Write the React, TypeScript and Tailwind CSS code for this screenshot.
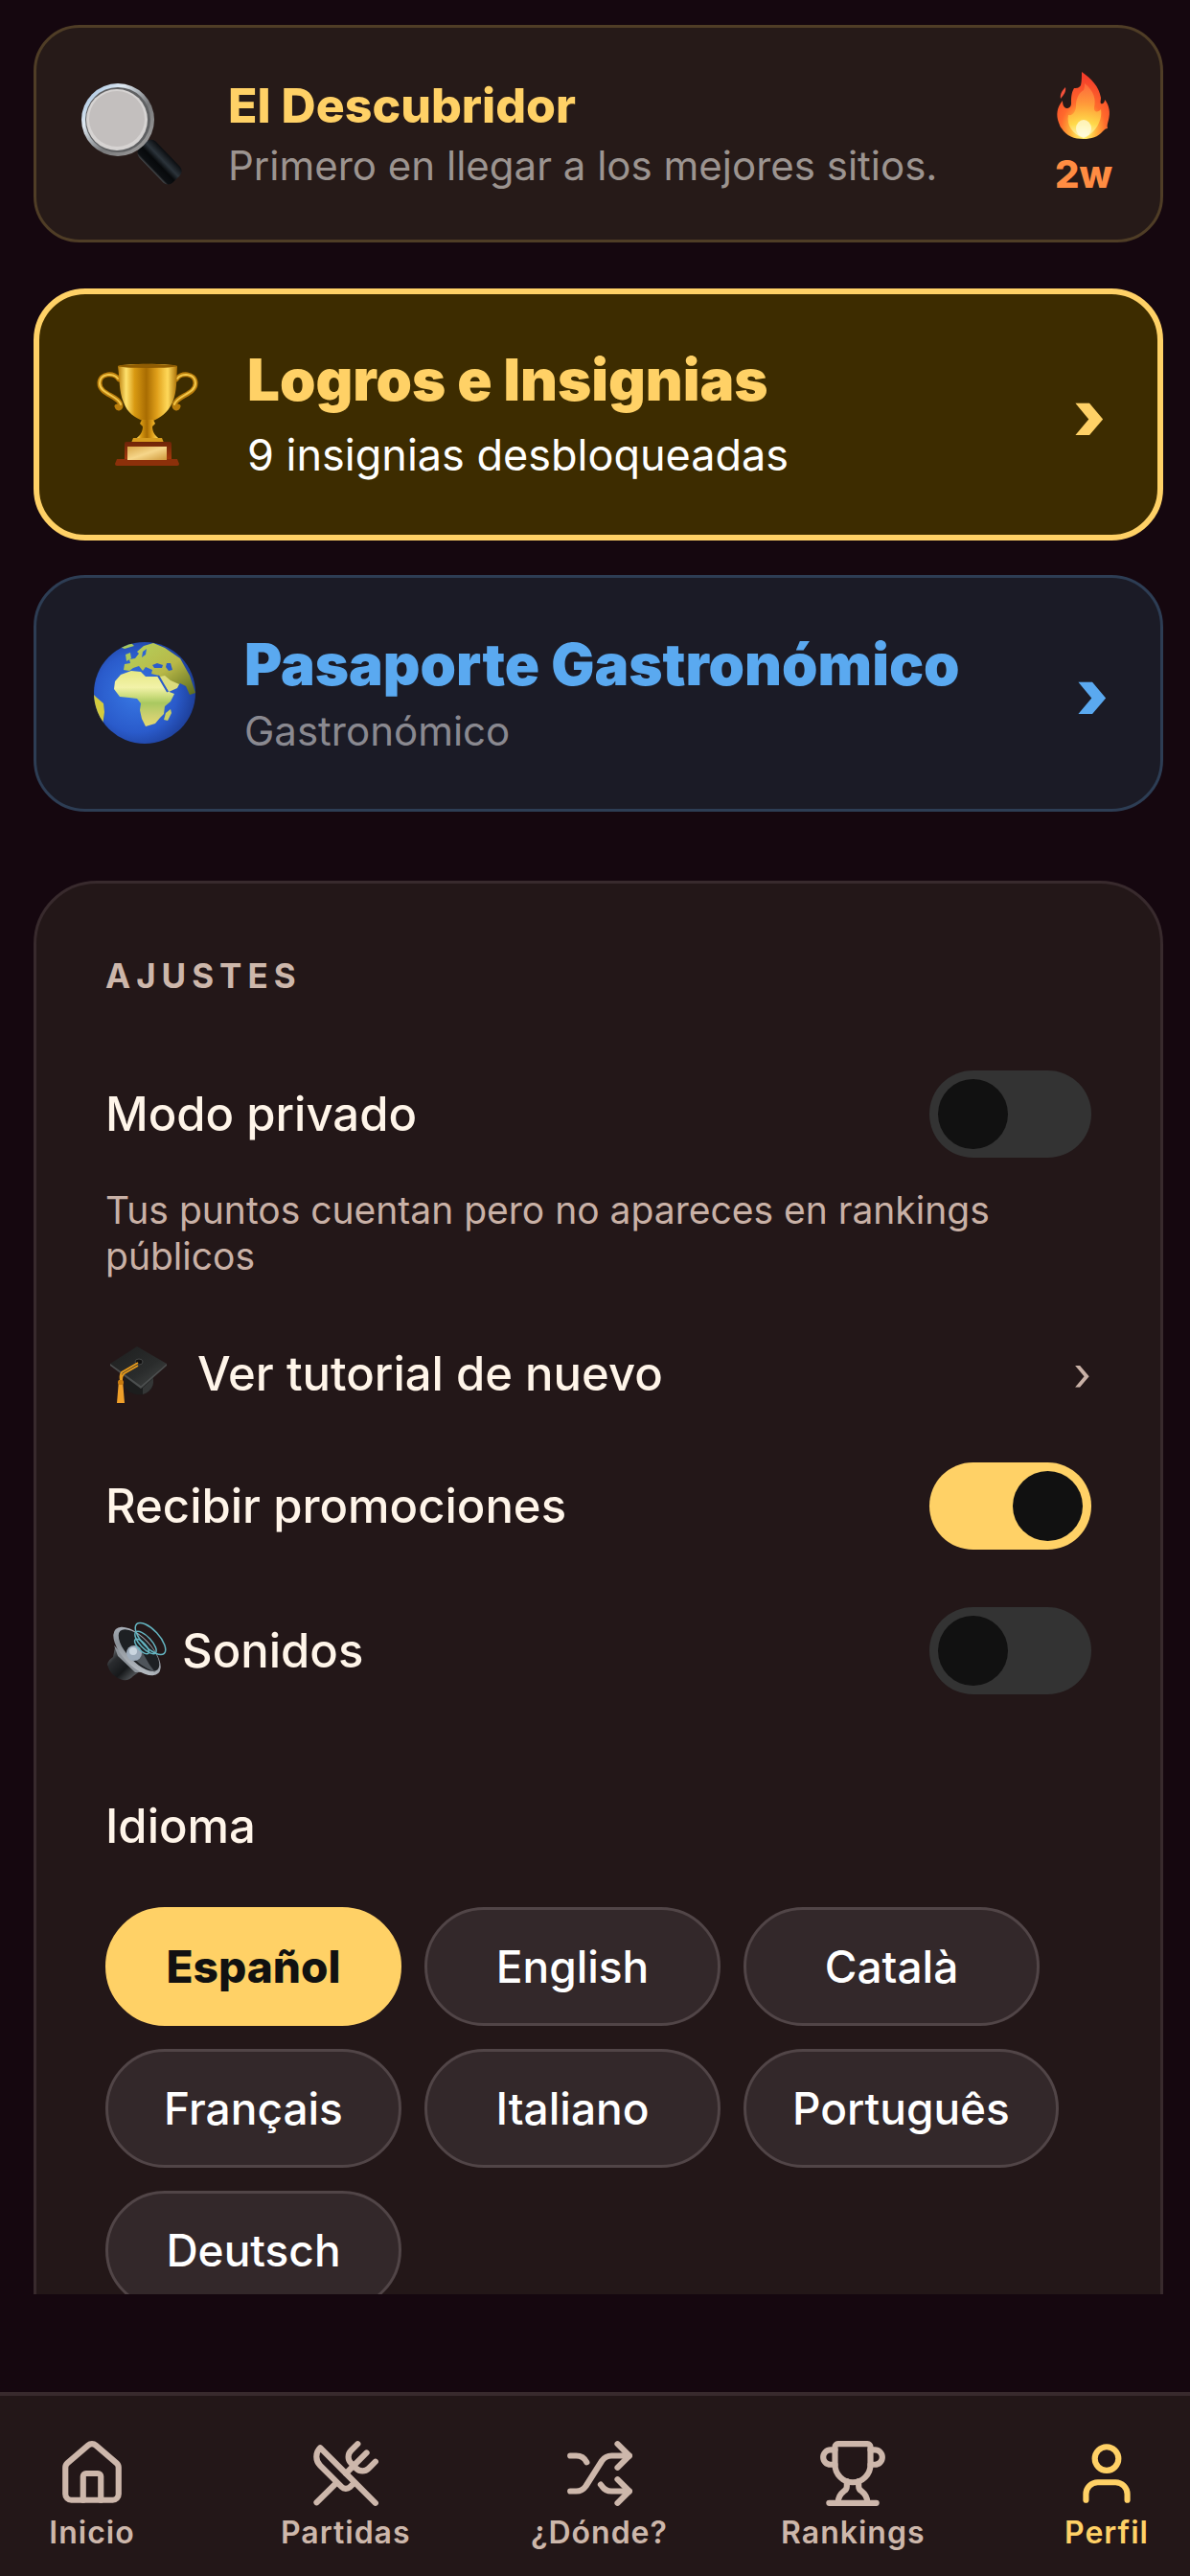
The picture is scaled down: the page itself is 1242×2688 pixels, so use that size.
import React, { useState } from 'react';
import { House, Shuffle, Trophy, User, UtensilsCrossed } from 'lucide-react';

const languages = ['Español', 'English', 'Català', 'Français', 'Italiano', 'Português', 'Deutsch'];

const tabs = [
  { label: 'Inicio', icon: House },
  { label: 'Partidas', icon: UtensilsCrossed },
  { label: '¿Dónde?', icon: Shuffle },
  { label: 'Rankings', icon: Trophy },
  { label: 'Perfil', icon: User },
];

const MagnifierIcon = () => (
  <svg className="w-[110px] h-[110px] shrink-0" viewBox="0 0 110 110" aria-hidden="true">
    <defs>
      <linearGradient id="mg-ring" x1="0" y1="0" x2="1" y2="1">
        <stop offset="0" stopColor="#8fb4da" />
        <stop offset="0.3" stopColor="#dfe9f2" />
        <stop offset="0.6" stopColor="#77787a" />
        <stop offset="1" stopColor="#a9a7a6" />
      </linearGradient>
      <linearGradient id="mg-handle" x1="0" y1="0" x2="0" y2="1">
        <stop offset="0" stopColor="#0b0d10" />
        <stop offset="0.35" stopColor="#2c343b" />
        <stop offset="0.6" stopColor="#07090b" />
        <stop offset="0.9" stopColor="#0d1013" />
        <stop offset="1" stopColor="#4a4d50" />
      </linearGradient>
    </defs>
    <path d="M62 66 L69 59 L78 68 L70 76Z" fill="#8f979e" />
    <rect x="66" y="57" width="50" height="24" rx="7" fill="url(#mg-handle)" transform="rotate(46 70 69)" />
    <circle cx="41" cy="40" r="38" fill="url(#mg-ring)" />
    <circle cx="41" cy="40" r="34" fill="#5f6062" />
    <circle cx="40" cy="40" r="32" fill="#d6d3d2" />
    <circle cx="40" cy="39" r="29" fill="#c3bfbe" />
  </svg>
);

const FlameIcon = () => (
  <svg className="w-[60px] h-[72px]" viewBox="0 0 60 72" aria-hidden="true">
    <defs>
      <radialGradient id="fl-body" cx="0.5" cy="0.88" r="0.8">
        <stop offset="0" stopColor="#fffbd0" />
        <stop offset="0.12" stopColor="#ffee6a" />
        <stop offset="0.3" stopColor="#ffb53a" />
        <stop offset="0.55" stopColor="#ff6a2c" />
        <stop offset="1" stopColor="#f43e2a" />
      </radialGradient>
      <linearGradient id="fl-core" x1="0" y1="0" x2="0" y2="1">
        <stop offset="0" stopColor="#ff7040" />
        <stop offset="0.4" stopColor="#ffa73c" />
        <stop offset="0.75" stopColor="#ffe04c" />
        <stop offset="1" stopColor="#fffde0" />
      </linearGradient>
    </defs>
    <path d="M6 29C5 24 8 20 11 17C12 22 9 25 6 29Z" fill="#f5503a" />
    <path
      d="M28 1C38 8 46 16 48 28C48 31 47 33 48 34C50 35 52 33 52 30C57 36 58 44 56 51C55 55 54 57 55 60C53 60 52 61 50 63C45 69 38 71 30 71C20 71 12 68 7 60C5 58 5 56 4 54C1 46 2 38 8 31C8 35 9 38 12 39C15 39 17 37 17 34C17 28 17 23 20 18C23 18 25 18 27 15C28 11 28 6 28 1Z"
      fill="url(#fl-body)"
    />
    <path
      d="M31 13C41 21 43 30 41 38C40 43 45 44 48 40C50 50 43 65 30 70C18 66 12 56 14 46C19 47 22 42 22 36C22 28 26 22 30 20C31 18 31 15 31 13Z"
      fill="url(#fl-core)"
      opacity="0.8"
    />
    <ellipse cx="30" cy="60" rx="8" ry="9" fill="#fffde8" opacity="0.7" />
  </svg>
);

const CupIcon = () => (
  <svg className="w-[117px] h-[117px] shrink-0" viewBox="0 0 117 117" aria-hidden="true">
    <defs>
      <linearGradient id="cup-gold" x1="0" y1="0" x2="1" y2="0">
        <stop offset="0" stopColor="#b87a08" />
        <stop offset="0.14" stopColor="#ffe26e" />
        <stop offset="0.28" stopColor="#d99a12" />
        <stop offset="0.48" stopColor="#a86c02" />
        <stop offset="0.66" stopColor="#e0a01a" />
        <stop offset="0.84" stopColor="#ffd95a" />
        <stop offset="1" stopColor="#a96d04" />
      </linearGradient>
      <linearGradient id="cup-wood" x1="0" y1="0" x2="0" y2="1">
        <stop offset="0" stopColor="#6e2408" />
        <stop offset="1" stopColor="#a83b0c" />
      </linearGradient>
      <linearGradient id="cup-plate" x1="0" y1="0" x2="1" y2="1">
        <stop offset="0" stopColor="#d9a648" />
        <stop offset="0.5" stopColor="#f6d68a" />
        <stop offset="1" stopColor="#cf983a" />
      </linearGradient>
    </defs>
    <g fill="none" strokeLinecap="round">
      <path d="M29 22C25 14 9 15 9 26C9 38 30 39 31 49C31 52 28 53 27 50" stroke="#b97d0c" strokeWidth="5" />
      <path d="M28 21C24 15 9 15 9 26C9 37 29 39 31 48" stroke="#f3c84a" strokeWidth="2" />
      <path d="M89 22C93 14 109 15 109 26C109 38 88 39 87 49C87 52 90 53 91 50" stroke="#b97d0c" strokeWidth="5" />
      <path d="M90 21C94 15 109 15 109 26C109 37 89 39 87 48" stroke="#f3c84a" strokeWidth="2" />
    </g>
    <path d="M28 8C38 5 80 5 90 8C89 22 90 34 85 46C80 57 72 62 65 65H54C46 62 38 57 34 46C29 34 30 22 28 8Z" fill="url(#cup-gold)" />
    <ellipse cx="59" cy="8" rx="31" ry="2" fill="#8f5c03" />
    <path d="M53 64H65L67 68L64 71C64 77 67 82 75 86H43C51 82 54 77 54 71L51 68Z" fill="url(#cup-gold)" />
    <path d="M44 83H74L76 88H42Z" fill="#d79c1e" />
    <rect x="35" y="87" width="49" height="20" rx="2" fill="url(#cup-wood)" />
    <path d="M27 105H90L92 110Q92 112 90 112H27Q25 112 25 110Z" fill="#8c300a" />
    <rect x="38" y="92" width="41" height="14" fill="url(#cup-plate)" />
  </svg>
);

const GlobeIcon = () => (
  <svg className="w-[117px] h-[117px] shrink-0" viewBox="0 0 117 117" aria-hidden="true">
    <defs>
      <radialGradient id="gl-sea" cx="0.42" cy="0.5" r="0.6">
        <stop offset="0" stopColor="#3878e4" />
        <stop offset="0.65" stopColor="#2a5bcb" />
        <stop offset="1" stopColor="#1c3c94" />
      </radialGradient>
      <linearGradient id="gl-africa" x1="0" y1="0" x2="0" y2="1">
        <stop offset="0" stopColor="#e6e884" />
        <stop offset="0.3" stopColor="#f2f2a8" />
        <stop offset="0.46" stopColor="#cbdc7c" />
        <stop offset="0.58" stopColor="#a9c860" />
        <stop offset="0.8" stopColor="#cdd070" />
        <stop offset="1" stopColor="#e6da70" />
      </linearGradient>
      <linearGradient id="gl-europe" x1="0" y1="0" x2="1" y2="1">
        <stop offset="0" stopColor="#b4d35e" />
        <stop offset="0.55" stopColor="#b8b848" />
        <stop offset="1" stopColor="#5a6a1c" />
      </linearGradient>
      <clipPath id="gl-clip">
        <circle cx="59" cy="58" r="53" />
      </clipPath>
    </defs>
    <circle cx="59" cy="58" r="53" fill="url(#gl-sea)" />
    <g clipPath="url(#gl-clip)">
      <path d="M37 34L38 28L44 27L43 23L49 22L53 17L51 15L58 9L68 6L80 11L96 22L106 40L112 58L106 60L102 51L96 48L91 54L83 55L78 47L74 40L66 38L67 34L60 31L57 35L53 30L47 32L43 35Z" fill="url(#gl-europe)" />
      <path d="M57 15L61 12L60 18L56 21Z" fill="#2f65d2" />
      <path d="M67 29L72 27L78 29L77 32L69 32ZM82 27L86 27L88 34L84 35L81 31Z" fill="#2a5bcb" />
      <path d="M39 18L44 16L45 22L40 25ZM33 10L45 6L48 9L38 12Z" fill="#a9c95a" />
      <path d="M34 39L45 35L55 36L60 41L73 41L77 48L82 56L90 59L86 67L80 72L79 80L75 84L70 90L60 93L56 85L54 76L55 69L51 64L43 63L33 62L27 54L28 46Z" fill="url(#gl-africa)" />
      <path d="M75 41L80 40L86 45L95 49L93 53L84 57L79 49Z" fill="#dcdc7c" />
      <path d="M73 40L83 57" stroke="#2a5bcb" strokeWidth="2" fill="none" />
      <path d="M81 79L86 75L87 79L83 87L79 86Z" fill="#c9cf62" />
      <path d="M4 58L9 63L16 69L17 78L15 92L6 84Z" fill="#d3cb3e" />
    </g>
  </svg>
);

const GradCapIcon = () => (
  <svg className="w-[64px] h-[64px] shrink-0" viewBox="0 0 64 64" aria-hidden="true">
    <defs>
      <linearGradient id="gc-board" x1="0" y1="0" x2="1" y2="1">
        <stop offset="0" stopColor="#1d1e1e" />
        <stop offset="0.6" stopColor="#2a2c2c" />
        <stop offset="1" stopColor="#454847" />
      </linearGradient>
    </defs>
    <path d="M20 33V45C24 52 32 54 39 53C46 51 50 46 50 40V30Z" fill="#1c1d1d" />
    <path d="M39 46L50 36V41C49 47 45 51 39 53Z" fill="#343636" />
    <path d="M5 21L33 3L64 21L37 44Z" fill="url(#gc-board)" />
    <path d="M5 21L37 44L64 21L64 23L37 47L5 23Z" fill="#4b4e4e" />
    <ellipse cx="35" cy="19" rx="4" ry="3" fill="#111" stroke="#454747" />
    <path d="M34 20L17 30Q15 33 16 39M34 23L20 31Q17 33 17 38" stroke="#e59a1c" strokeWidth="2" fill="none" />
    <path d="M14 38H18L20 62H12Z" fill="#f0a02a" />
    <rect x="13" y="38" width="6" height="5" rx="2" fill="#c97c10" />
  </svg>
);

const SpeakerIcon = () => (
  <svg className="w-[64px] h-[64px] shrink-0" viewBox="0 0 64 64" aria-hidden="true">
    <defs>
      <linearGradient id="sp-body" x1="0" y1="0" x2="1" y2="1">
        <stop offset="0" stopColor="#8b8f93" />
        <stop offset="0.3" stopColor="#2a2c2f" />
        <stop offset="0.6" stopColor="#16181a" />
        <stop offset="1" stopColor="#74787c" />
      </linearGradient>
      <linearGradient id="sp-rim" x1="0" y1="0" x2="1" y2="1">
        <stop offset="0" stopColor="#b9c0c9" />
        <stop offset="0.5" stopColor="#8a9097" />
        <stop offset="1" stopColor="#c6ccd2" />
      </linearGradient>
    </defs>
    <path d="M10 28L36 53L29 58Q25 63 18 62Q5 58 2 46Q3 41 8 38Z" fill="url(#sp-body)" />
    <path d="M9 26L38 54L31 54L13 37Z" fill="#8d939a" />
    <ellipse cx="33" cy="32" rx="32" ry="15" transform="rotate(46 33 32)" fill="url(#sp-rim)" />
    <ellipse cx="35" cy="31" rx="28" ry="12" transform="rotate(46 35 31)" fill="#1d2023" />
    <path d="M22 32L38 32L46 46L52 54Q36 48 22 32Z" fill="#4e545a" />
    <circle cx="30" cy="34" r="8" fill="#9dabba" />
    <circle cx="29" cy="32" r="4" fill="#cbd6e0" />
    <g fill="none" stroke="#64b4c0" strokeWidth="1.5">
      <ellipse cx="47" cy="19" rx="21" ry="9" transform="rotate(47 47 19)" />
      <ellipse cx="42" cy="23" rx="15" ry="6" transform="rotate(47 42 23)" />
      <ellipse cx="38" cy="27" rx="10" ry="4" transform="rotate(47 38 27)" />
    </g>
  </svg>
);

interface ToggleRowProps {
  id: string;
  label: string;
  icon?: React.ReactNode;
  defaultChecked?: boolean;
}

const ToggleRow = ({ id, label, icon, defaultChecked }: ToggleRowProps) => (
  <div className="flex items-center justify-between">
    <label htmlFor={id} className="flex items-center gap-4 text-[49px] leading-[60px] font-medium text-[#fff5e9]">
      {icon}
      {label}
    </label>
    <input
      id={id}
      type="checkbox"
      role="switch"
      defaultChecked={defaultChecked}
      className="appearance-none shrink-0 w-[169px] h-[91px] p-[9px] rounded-full bg-[#333333] checked:bg-[#ffd166] cursor-pointer before:block before:content-[''] before:size-[73px] before:rounded-full before:bg-[#111111] checked:before:translate-x-[78px]"
    />
  </div>
);

const App = () => {
  const [language, setLanguage] = useState('Español');

  return (
    <div className="h-screen flex flex-col bg-[#15070f] font-['Inter',sans-serif]">
      <main className="flex-1 min-h-0 overflow-y-auto [scrollbar-width:none] pt-[26px] pl-[35px] pr-[28px] mb-[102px]">
        {/* Player title */}
        <section className="flex items-center gap-[46px] h-[227px] pl-[44px] pr-[48px] rounded-[48px] border-3 border-[#4f3d26] bg-[#261a18]">
          <MagnifierIcon />
          <div className="flex-1">
            <h2 className="text-[50px] leading-[62px] font-extrabold text-[#ffd166]">El Descubridor</h2>
            <p className="mt-1 text-[42px] leading-[56px] text-[#9c9490]">Primero en llegar a los mejores sitios.</p>
          </div>
          <div className="flex flex-col items-center gap-3 w-[64px]">
            <FlameIcon />
            <span className="text-[40px] leading-[48px] font-extrabold text-[#ff8c42]">2w</span>
          </div>
        </section>

        {/* Badges */}
        <button className="mt-[48px] w-full flex items-center gap-[46px] px-[54px] py-[53px] rounded-[54px] border-6 border-[#ffd166] bg-[#3d2c00] text-left cursor-pointer">
          <CupIcon />
          <span className="flex-1">
            <span className="block text-[60px] leading-[72px] font-black text-[#ffd166]">Logros e Insignias</span>
            <span className="block mt-3 text-[45px] leading-[61px] text-white">9 insignias desbloqueadas</span>
          </span>
          <span className="text-[72px] leading-[72px] font-black text-[#ffd166]">›</span>
        </button>

        {/* Passport */}
        <button className="mt-[36px] w-full flex items-center gap-[46px] px-[54px] py-[54px] rounded-[54px] border-3 border-[#2d3d54] bg-[#1b1b26] text-left cursor-pointer">
          <GlobeIcon />
          <span className="flex-1">
            <span className="block text-[60px] leading-[72px] font-black text-[#5aa9f0]">Pasaporte Gastronómico</span>
            <span className="block mt-[6px] text-[42px] leading-[55px] text-[#8a8990]">Gastronómico</span>
          </span>
          <span className="text-[72px] leading-[72px] font-black text-[#5aa9f0]">›</span>
        </button>

        {/* Settings */}
        <section className="mt-[72px] px-[72px] pt-[72px] pb-[72px] rounded-[66px] border-3 border-[#382a2d] bg-[#231718]">
          <h3 className="text-[35px] leading-[48px] font-bold tracking-[6px] text-[#cdb7ab]">AJUSTES</h3>

          <div className="mt-[75px]">
            <ToggleRow id="private-mode" label="Modo privado" />
            <p className="mt-[31px] text-[39px] leading-[48px] text-[#c9b1a6]">
              Tus puntos cuentan pero no apareces en rankings públicos
            </p>
          </div>

          <button className="mt-[69px] w-full h-[60px] flex items-center gap-[32px] text-left text-[49px] leading-[60px] font-medium text-[#fff5e9] cursor-pointer">
            <GradCapIcon />
            <span className="flex-1">Ver tutorial de nuevo</span>
            <span className="font-normal text-[#c9b1a6]">›</span>
          </button>

          <div className="mt-[62px] flex flex-col gap-[60px]">
            <ToggleRow id="promos" label="Recibir promociones" defaultChecked />
            <ToggleRow id="sounds" label="Sonidos" icon={<SpeakerIcon />} />
          </div>

          <h4 className="mt-[108px] text-[49px] leading-[60px] font-medium text-[#fff5e9]">Idioma</h4>
          <div className="mt-[54px] flex flex-wrap gap-6">
            {languages.map((name) => (
              <button
                key={name}
                aria-pressed={name === language}
                onClick={() => setLanguage(name)}
                className={
                  name === language
                    ? 'min-w-[309px] h-[124px] px-[48px] rounded-full border-3 border-[#ffd166] bg-[#ffd166] text-[46px] font-extrabold text-[#111111] cursor-pointer'
                    : 'min-w-[309px] h-[124px] px-[48px] rounded-full border-3 border-[#514547] bg-[#33282a] text-[46px] font-medium text-white cursor-pointer'
                }
              >
                {name}
              </button>
            ))}
          </div>
        </section>
      </main>

      {/* Bottom tabs */}
      <nav className="shrink-0 flex justify-between pt-[44px] pb-[25px] pl-[21px] pr-[12px] border-t-4 border-[#382a2d] bg-[#231718]">
        {tabs.map(({ label, icon: Icon }) => (
          <a
            key={label}
            href="#"
            className={
              label === 'Perfil'
                ? 'w-[150px] flex flex-col items-center gap-[5px] text-[#ffd166]'
                : 'w-[150px] flex flex-col items-center gap-[5px] text-[#cdb7ab]'
            }
          >
            <Icon size={74} strokeWidth={2} />
            <span className="text-[32px] leading-[40px] font-semibold tracking-[1px]">{label}</span>
          </a>
        ))}
      </nav>
    </div>
  );
};

export default App;
